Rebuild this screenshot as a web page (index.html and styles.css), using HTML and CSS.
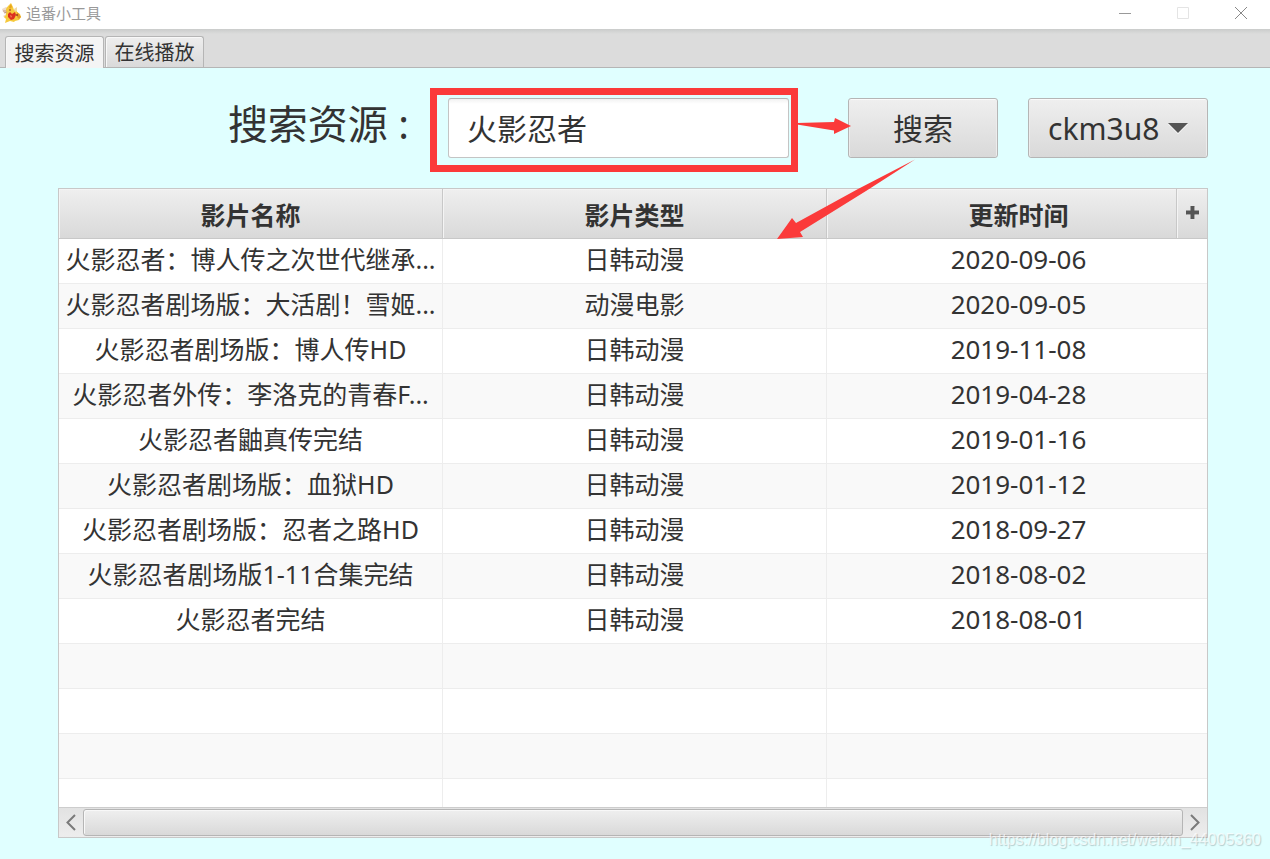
FILE: index.html
```html
<!DOCTYPE html>
<html lang="zh-CN">
<head>
<meta charset="utf-8">
<title>追番小工具</title>
<link rel="stylesheet" href="styles.css">
</head>
<body>
<div class="window">
  <header class="titlebar">
    <svg class="app-icon" viewBox="0 0 20 20" aria-hidden="true">
      <path d="M0 6l4-2 3 1 1 4-4 2-3-2zM1 13l3-2 2 3-3 1z" fill="#eedccb"/>
      <path d="M4 6l2-3 3-3 2 4 1 3 2-1 1 3 3 2 1 3-2 3-4 1-1 1-4-1-5 2 1-4-2-2 2-2z" fill="#f6c93c"/>
      <path d="M7 4l2-3 1 3-2 2z" fill="#e8a51c"/>
      <path d="M12 6l3-2v3l-2 2z" fill="#f1d9a4"/>
      <path d="M6 11l2-2 2 2 3-2 1 3-2 4-3 1-3-3z" fill="#dd2f20"/>
      <path d="M8 12l2 1-1 2z" fill="#f08a5a"/>
      <path d="M15 9l2 2 2 3-2 2-2-2z" fill="#e39a26"/>
      <path d="M1 8h3M2 10l3-1" stroke="#c59a86"/>
      <circle cx="8" cy="7" r="1" fill="#b4622a"/><circle cx="15" cy="12" r="1" fill="#9c3a20"/>
    </svg>
    <span class="title">追番小工具</span>
    <div class="window-controls">
      <button class="control" aria-label="最小化"><svg viewBox="0 0 12 12"><path d="M0 6.500h12" stroke="#999"/></svg></button>
      <button class="control" aria-label="最大化" disabled><svg viewBox="0 0 12 12"><path d="M.5.5h11v11H.5z" stroke="#e4e4e4"/></svg></button>
      <button class="control" aria-label="关闭"><svg viewBox="0 0 12 12"><path d="M0 0l12 12M12 0 0 12" stroke="#888"/></svg></button>
    </div>
  </header>
  <nav class="tabs" role="tablist">
    <button class="tab active" role="tab" aria-selected="true">搜索资源</button>
    <button class="tab" role="tab" aria-selected="false">在线播放</button>
  </nav>
  <main class="content">
    <form class="search">
      <label class="search-label" for="keyword">搜索资源 :</label>
      <div class="field"><input id="keyword" class="keyword" type="text" value="火影忍者"></div>
      <button class="push" type="button">搜索</button>
      <div class="source">
        <select class="source-select" aria-label="播放源"><option>ckm3u8</option></select>
        <svg class="caret" viewBox="0 0 20 11" aria-hidden="true"><path d="M0 1h20L10 11z" fill="#fff"/><path d="M0 0h20L10 10z" fill="#555"/></svg>
      </div>
    </form>
    <section class="grid">
      <div class="viewport">
        <table class="films">
          <thead><tr><th>影片名称</th><th>影片类型</th><th>更新时间</th></tr></thead>
          <tbody>
            <tr><td>火影忍者：博人传之次世代继承...</td><td>日韩动漫</td><td class="date">2020-09-06</td></tr>
            <tr><td>火影忍者剧场版：大活剧！雪姬...</td><td>动漫电影</td><td class="date">2020-09-05</td></tr>
            <tr><td>火影忍者剧场版：博人传HD</td><td>日韩动漫</td><td class="date">2019-11-08</td></tr>
            <tr><td>火影忍者外传：李洛克的青春F...</td><td>日韩动漫</td><td class="date">2019-04-28</td></tr>
            <tr><td>火影忍者鼬真传完结</td><td>日韩动漫</td><td class="date">2019-01-16</td></tr>
            <tr><td>火影忍者剧场版：血狱HD</td><td>日韩动漫</td><td class="date">2019-01-12</td></tr>
            <tr><td>火影忍者剧场版：忍者之路HD</td><td>日韩动漫</td><td class="date">2018-09-27</td></tr>
            <tr><td>火影忍者剧场版1-11合集完结</td><td>日韩动漫</td><td class="date">2018-08-02</td></tr>
            <tr><td>火影忍者完结</td><td>日韩动漫</td><td class="date">2018-08-01</td></tr>
            <tr><td></td><td></td><td></td></tr>
            <tr><td></td><td></td><td></td></tr>
            <tr><td></td><td></td><td></td></tr>
            <tr><td></td><td></td><td></td></tr>
          </tbody>
        </table>
        <button class="columns-menu" aria-label="选择列"><svg viewBox="0 0 13 13"><path d="M5 1h4v4h4v4H9v4H5V9H1V5h4z" fill="#fff"/><path d="M4.500 0h4v4.500H13v4H8.500V13h-4V8.500H0v-4h4.500z" fill="#555"/></svg></button>
      </div>
      <div class="scrollbar">
        <button class="step" aria-label="向左滚动"><svg viewBox="0 0 10 17"><path d="M9 1 1.500 8.500 9 16" stroke="#7a7a7a" stroke-width="2"/></svg></button>
        <div class="thumb"></div>
        <button class="step" aria-label="向右滚动"><svg viewBox="0 0 10 17"><path d="M1 1l7.500 7.500L1 16" stroke="#7a7a7a" stroke-width="2"/></svg></button>
      </div>
    </section>
    <svg class="arrows" viewBox="770 110 160 135" aria-hidden="true">
      <path d="M797 123l37-1 1-4 16 8-17 8v-3.500L797 124.500z"/>
      <path d="M777 239l15-21 4 5 62-34 57-29.500-49 31.500L800 232l3 5z"/>
    </svg>
  </main>
  <div class="watermark">https://blog.csdn.net/weixin_44005360</div>
</div>
</body>
</html>
```
FILE: styles.css
```css
* { box-sizing: border-box; }

body {
  margin: 0;
  color: #333;
  font-family: "Noto Sans", "Noto Sans CJK SC", sans-serif;
}

button, input, select {
  margin: 0;
  padding: 0;
  color: inherit;
  font: inherit;
}

svg { display: block; fill: none; }

.window {
  position: relative;
  display: flex;
  flex-direction: column;
  height: 100vh;
  overflow: hidden;
  background: #e0ffff;
}

.titlebar {
  display: flex;
  align-items: center;
  height: 29px;
  padding-left: 2px;
  background: #fff;
}

.app-icon { width: 20px; height: 20px; margin: 0 4px 3px 0; }

.title {
  flex: 1;
  padding-bottom: 4px;
  color: #999;
  font-size: 15px;
  line-height: 20px;
}

.window-controls { display: flex; height: 100%; }

.control {
  display: grid;
  place-items: center;
  width: 58px;
  padding: 0 0 3px;
  border: 0;
  background: none;
}

.control svg { width: 12px; height: 12px; }

.tabs {
  display: flex;
  align-items: flex-end;
  gap: 1px;
  height: 39px;
  padding-left: 5px;
  border-bottom: 1px solid #b5b5b5;
  background: linear-gradient(#cacccb, #dcdcdc 5px);
}

.tab {
  width: 99px;
  height: 31px;
  padding-top: 2px;
  border: 1px solid #b5b5b5;
  border-bottom: 0;
  border-radius: 3px 3px 0 0;
  background: linear-gradient(#eee, #dadada);
  box-shadow: inset 1px 1px #f8f8f8;
  font-size: 20px;
  line-height: 28px;
}

.tab.active {
  height: 32px;
  margin-bottom: -1px;
  background: #f4f4f4;
}

.content {
  position: relative;
  display: flex;
  flex: 1;
  flex-direction: column;
  min-height: 0;
  padding: 30px 62px 21px 58px;
}

.search {
  display: flex;
  justify-content: flex-end;
  height: 60px;
  margin-bottom: 30px;
}

.search-label {
  margin-right: 39px;
  font-size: 40px;
  line-height: 52px;
  white-space: nowrap;
}

.field { position: relative; width: 341px; margin-right: 59px; }

.field::after {
  position: absolute;
  inset: -10px -9px -14px -18px;
  border: 7px solid #fb3a3a;
  content: "";
  pointer-events: none;
}

.keyword {
  width: 100%;
  height: 60px;
  padding: 0 18px 2px;
  border: 1px solid #c4c4c4;
  border-top-color: #b5b5b5;
  border-radius: 3px;
  background: linear-gradient(#f2f2f2, #fff 5px);
  font-size: 30px;
}

.push, .source-select {
  height: 60px;
  border: 1px solid #b5b5b5;
  border-radius: 3px;
  background: linear-gradient(#efefef, #d9d9d9);
  box-shadow: inset 0 1px #fafafa, inset 1px 0 #ececec, inset -1px 0 #ececec;
  font-size: 30px;
}

.push { width: 150px; margin-right: 30px; padding-bottom: 2px; }

.source { position: relative; width: 180px; }

.source-select {
  width: 100%;
  padding-left: 19px;
  appearance: none;
}

.caret {
  position: absolute;
  top: 25px;
  right: 20px;
  width: 20px;
  height: 11px;
  pointer-events: none;
}

.grid {
  display: flex;
  flex: 1;
  flex-direction: column;
  min-height: 0;
  border: 1px solid #c8c8c8;
  background: #fff;
}

.viewport { position: relative; flex: 1; min-height: 0; overflow: hidden; }

.films {
  width: calc(100% + 4px);
  border-collapse: separate;
  border-spacing: 0;
  table-layout: fixed;
  font-size: 25px;
  line-height: 34px;
  text-align: center;
}

.films th {
  height: 50px;
  padding: 2px 0 0;
  border-right: 1px solid #c8c8c8;
  border-bottom: 1px solid #c8c8c8;
  background: linear-gradient(#efefef, #d9d9d9);
  box-shadow: inset 1px 1px #f4f4f4;
}

.films td {
  height: 45px;
  padding: 0 0 4px;
  border-right: 1px solid #ededed;
  border-bottom: 1px solid #ededed;
  overflow: hidden;
  white-space: nowrap;
}

.films tbody tr:nth-child(even) { background: #f9f9f9; }

.films .date { font-size: 26px; }

.columns-menu {
  position: absolute;
  top: 0;
  right: 0;
  display: grid;
  place-items: center;
  width: 31px;
  height: 50px;
  padding-bottom: 2px;
  border: 0;
  border-bottom: 1px solid #c8c8c8;
  border-left: 1px solid #c8c8c8;
  background: linear-gradient(#efefef, #d9d9d9);
  box-shadow: inset 1px 1px #f4f4f4;
}

.columns-menu svg { width: 13px; height: 13px; }

.scrollbar {
  display: flex;
  height: 30px;
  padding: 1px 0;
  border-top: 1px solid #cdcdcd;
  background: linear-gradient(#e2e2e2, #ededed);
}

.step {
  display: grid;
  flex: none;
  place-items: center;
  width: 24px;
  border: 0;
  background: none;
}

.step svg { width: 10px; height: 17px; }

.thumb {
  flex: 1;
  border: 1px solid #b5b5b5;
  border-radius: 3px;
  background: linear-gradient(#efefef, #d9d9d9);
  box-shadow: inset 1px 1px #f8f8f8;
}

.arrows {
  position: absolute;
  top: 42px;
  right: 340px;
  width: 160px;
  height: 135px;
  fill: #fb3a3a;
  pointer-events: none;
}

.watermark {
  position: absolute;
  right: 9px;
  bottom: 8px;
  color: rgba(255, 255, 255, 0.7);
  font-family: "Liberation Sans", sans-serif;
  font-size: 16px;
  line-height: 22px;
  text-shadow: 1px 1px 1px rgba(0, 0, 0, 0.2);
}
```
